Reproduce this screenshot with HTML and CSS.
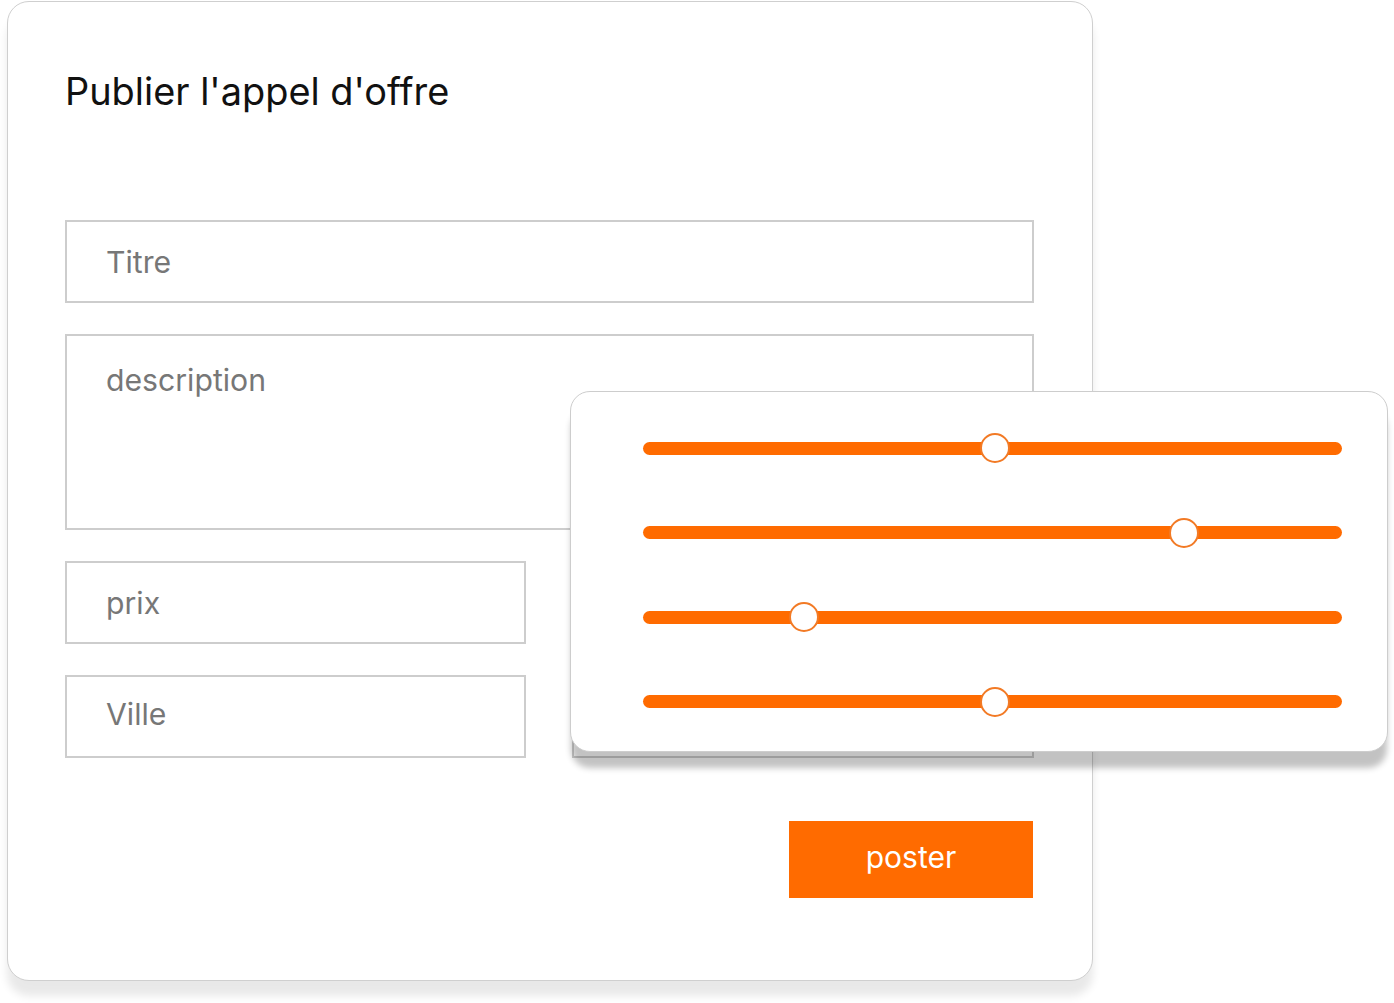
FILE: index.html
```html
<!DOCTYPE html>
<html lang="fr">
<head>
<meta charset="utf-8">
<title>Publier l'appel d'offre</title>
<link rel="stylesheet" href="styles.css">
</head>
<body>
<div class="card">
  <h1 class="title">Publier l'appel d'offre</h1>
  <div class="form">
    <div class="field field-line">Titre</div>
    <div class="field field-area">description</div>
    <div class="row-grid">
      <div class="field field-line">prix</div>
      <div class="field field-line row2">Ville</div>
      <div class="field field-hidden"></div>
    </div>
    <div class="actions">
      <button class="btn">poster</button>
    </div>
  </div>
  <div class="panel">
    <div class="slider"><div class="track"></div><div class="thumb" style="left:50.4%"></div></div>
    <div class="slider"><div class="track"></div><div class="thumb" style="left:77.4%"></div></div>
    <div class="slider"><div class="track"></div><div class="thumb" style="left:23%"></div></div>
    <div class="slider"><div class="track"></div><div class="thumb" style="left:50.4%"></div></div>
  </div>
</div>
</body>
</html>
```
FILE: styles.css
```css
* { box-sizing: border-box; }
html, body { margin: 0; padding: 0; background: #fff; }
body {
  font-family: Inter, "Noto Sans", "Liberation Sans", sans-serif;
  padding: 1px 0 0 7px;
  width: 1394px;
  height: 1003px;
  overflow: hidden;
}
.card {
  position: relative;
  width: 1086px;
  height: 980px;
  border: 1px solid #cfcfcf;
  border-radius: 22px;
  background: #fff;
  box-shadow: 0 15px 8px rgba(0,0,0,0.09);
  padding: 66px 58px 0 57px;
}
.title {
  margin: 0;
  font-size: 37.9px;
  font-weight: 400;
  line-height: 46px;
  color: #111;
}
.form {
  margin-top: 106px;
  display: flex;
  flex-direction: column;
  gap: 31px;
}
.field {
  border: 2px solid #cdcdcd;
  color: #777;
  font-size: 30.2px;
  padding-left: 39px;
  background: #fff;
}
.field-line {
  height: 83px;
  display: flex;
  align-items: center;
}
.field-area {
  height: 196px;
  padding-top: 26px;
}
.row-grid {
  display: grid;
  grid-template-columns: 461px 1fr;
  grid-template-rows: 82px 83px;
  column-gap: 46px;
  row-gap: 32px;
}
.row2 { grid-row: 2; grid-column: 1; padding-bottom: 6px; }
.field-hidden {
  grid-column: 2;
  grid-row: 1 / span 2;
  padding: 0;
}
.actions {
  display: flex;
  justify-content: flex-end;
  margin-top: 32px;
}
.btn {
  width: 244px;
  height: 77px;
  margin-right: 1px;
  border: 0;
  background: #ff6b00;
  color: #fff;
  font-family: inherit;
  font-size: 30px;
  padding: 0 0 5px 0;
}
.panel {
  position: absolute;
  left: 562px;
  top: 389px;
  width: 818px;
  height: 361px;
  background: #fff;
  border: 1px solid #cdcdcd;
  border-radius: 20px;
  box-shadow: 0 17px 6px -1px rgba(0,0,0,0.24);
  padding: 41px 45px 0 72px;
  display: flex;
  flex-direction: column;
  gap: 54.6px;
}
.slider {
  position: relative;
  height: 30px;
}
.track {
  position: absolute;
  left: 0;
  right: 0;
  top: 8.5px;
  height: 13px;
  border-radius: 7px;
  background: #ff6b00;
}
.thumb {
  position: absolute;
  top: 0;
  width: 30px;
  height: 30px;
  margin-left: -15px;
  border-radius: 50%;
  background: #fff;
  border: 2px solid #f27a25;
}
```
